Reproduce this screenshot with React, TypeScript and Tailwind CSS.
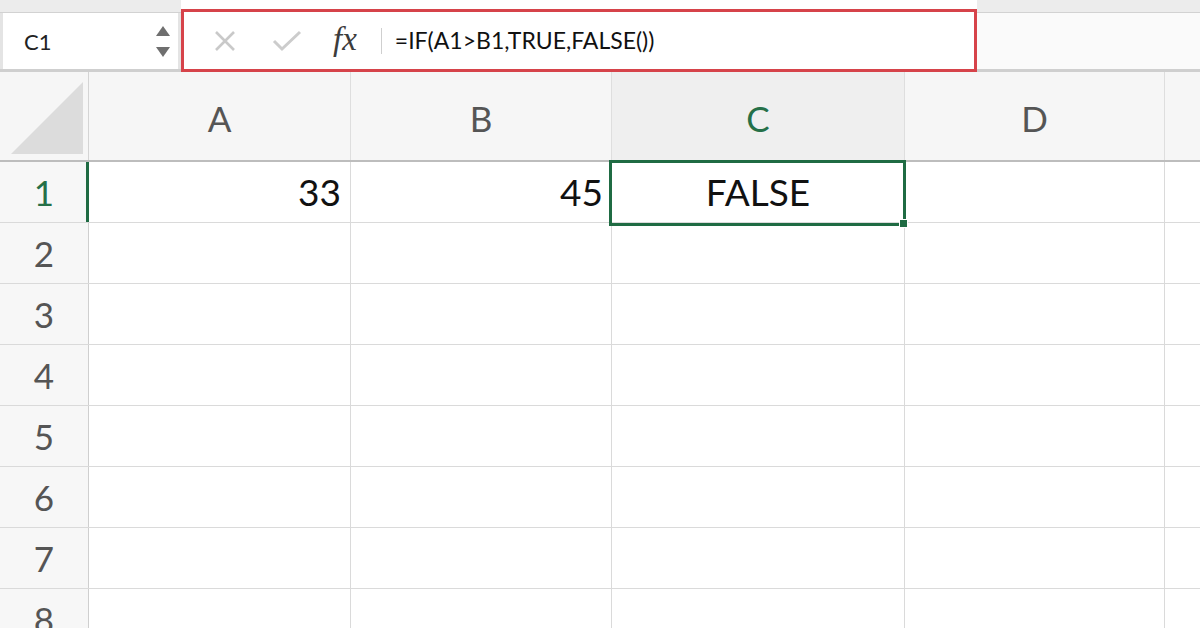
import React from 'react';

const COLS = [
  { id: 'A', w: 'w-[262px]' },
  { id: 'B', w: 'w-[261px]' },
  { id: 'C', w: 'w-[293px]' },
  { id: 'D', w: 'w-[260px]' },
];

const ROWS = [1, 2, 3, 4, 5, 6, 7, 8];

const cellValues: Record<string, { text: string; align: string }> = {
  A1: { text: '33', align: 'justify-end pr-[9px]' },
  B1: { text: '45', align: 'justify-end pr-[8px]' },
  C1: { text: 'FALSE', align: 'justify-center' },
};

function TopStrip({ children, bar }: { children?: React.ReactNode; bar: string }) {
  return (
    <div className="flex flex-col">
      <div className="h-[12px] bg-[#ececec]" />
      <div className="h-px bg-[#d2d2d2]" />
      <div className={`flex h-[56px] ${bar}`}>{children}</div>
      <div className="h-[3px] bg-[#cfcfcf]" />
    </div>
  );
}

function FormulaBar() {
  return (
    <div className="flex h-[72px] w-full">
      <div className="w-[181px] shrink-0">
        <TopStrip bar="bg-[#e4e4e4] pl-[3px] pr-[3px]">
          <div className="flex flex-1 items-center bg-white pl-[21px] pr-[8px]">
            <span className="text-[22px] text-[#222]">C1</span>
            <div className="ml-auto flex flex-col items-center gap-[11px]">
              <svg width="14" height="10" viewBox="0 0 14 10">
                <path d="M7 0 L14 10 L0 10 Z" fill="#6f6f6f" />
              </svg>
              <svg width="14" height="10" viewBox="0 0 14 10">
                <path d="M0 0 L14 0 L7 10 Z" fill="#6f6f6f" />
              </svg>
            </div>
          </div>
        </TopStrip>
      </div>

      {/* highlighted formula area */}
      <div className="mt-[9px] flex h-[63px] w-[796px] shrink-0 items-center border-[3px] border-[#d6434a] bg-white">
        <svg className="ml-[30px]" width="22" height="22" viewBox="0 0 22 22">
          <path d="M2 2 L20 20 M20 2 L2 20" stroke="#c9c9c9" strokeWidth="2.6" fill="none" />
        </svg>
        <svg className="ml-[36px]" width="30" height="22" viewBox="0 0 30 22">
          <path d="M2 11 L10 19 L28 2" stroke="#cccccc" strokeWidth="3" fill="none" />
        </svg>
        <span className="ml-[31px] -mt-[2px] font-['Liberation_Serif',serif] text-[33px] italic leading-none text-[#3c3c3c]">
          fx
        </span>
        <div className="ml-[24px] h-[26px] w-px bg-[#cfcfcf]" />
        <span className="ml-[13px] text-[23px] text-[#111]">=IF(A1&gt;B1,TRUE,FALSE())</span>
      </div>

      <div className="flex-1">
        <TopStrip bar="bg-[#fafafa]" />
      </div>
    </div>
  );
}

export default function App() {
  return (
    <div className="relative h-[628px] w-[1200px] overflow-hidden bg-white font-['Lato',sans-serif]">
      <FormulaBar />

      {/* column headers */}
      <div className="flex h-[90px] border-b-2 border-[#bdbdbd] bg-[#f6f6f6]">
        <div className="flex w-[89px] shrink-0 items-end justify-end border-r border-[#d4d4d4] pb-[6px] pr-[5px]">
          <svg width="72" height="72" viewBox="0 0 72 72">
            <path d="M72 0 L72 72 L0 72 Z" fill="#dcdcdc" />
          </svg>
        </div>
        {COLS.map((c) => (
          <div
            key={c.id}
            className={`${c.w} flex shrink-0 items-center justify-center border-r border-[#dedede] pt-[4px] text-[35px] ${
              c.id === 'C' ? 'bg-[#efefef] text-[#257048]' : 'text-[#555]'
            }`}
          >
            {c.id}
          </div>
        ))}
        <div className="flex-1" />
      </div>

      {/* rows */}
      {ROWS.map((r) => (
        <div key={r} className="flex h-[61px] border-b border-[#dadada]">
          <div
            className={`flex w-[89px] shrink-0 items-center justify-center bg-[#f7f7f7] text-[35px] ${
              r === 1 ? 'border-r-[3px] border-[#1f6b43] pl-[2px] text-[#257048]' : 'border-r border-[#cfcfcf] text-[#555]'
            }`}
          >
            {r}
          </div>
          {COLS.map((c) => {
            const v = cellValues[`${c.id}${r}`];
            return (
              <div
                key={c.id}
                className={`${c.w} flex shrink-0 items-center border-r border-[#dadada] text-[37px] text-[#111] ${v ? v.align : ''}`}
              >
                {v?.text}
              </div>
            );
          })}
          <div className="flex-1" />
        </div>
      ))}

      {/* active cell selection */}
      <div className="absolute left-[609px] top-[160px] h-[66px] w-[297px] border-[3px] border-[#1f6b43]" />
      <div className="absolute left-[899px] top-[219px] h-[9px] w-[9px] border border-white bg-[#1f6b43]" />
    </div>
  );
}
